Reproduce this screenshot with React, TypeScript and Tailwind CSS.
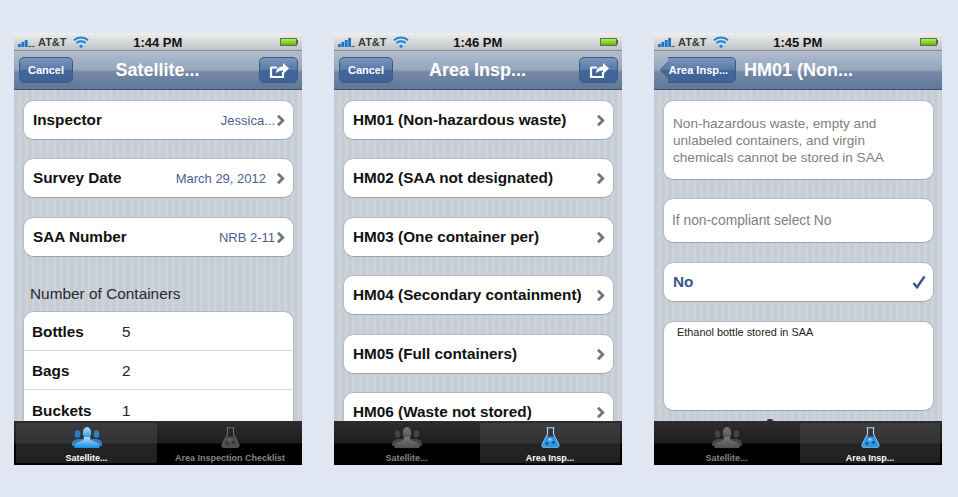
import React from "react";

const stripes =
  "bg-[repeating-linear-gradient(90deg,#c6cdd6_0px,#c6cdd6_4px,#ccd3db_4px,#ccd3db_7px)]";

function Signal({ full }: { full: boolean }) {
  const hs = [3, 5, 7, 9, 9];
  return (
    <svg width="18" height="9" viewBox="0 0 18 9" className="block">
      {hs.map((h, i) => {
        const on = i < (full ? 4 : 3);
        return (
          <rect
            key={i}
            x={i * 3.4}
            y={on ? 9 - h : 8}
            width="2.8"
            height={on ? h : 1}
            fill={on ? "#1f74c8" : "#555"}
          />
        );
      })}
    </svg>
  );
}

function Wifi() {
  return (
    <svg width="16" height="12" viewBox="0 0 16 12" className="block" fill="none" stroke="#0f80e4" strokeWidth="2">
      <path d="M1 4.200C5 .6 11 .6 15 4.200" />
      <path d="M3.500 7C6 4.800 10 4.800 12.500 7" />
      <circle cx="8" cy="10.300" r="1.500" fill="#0f80e4" stroke="none" />
    </svg>
  );
}

function Battery() {
  return (
    <div className="flex items-center">
      <div className="w-[17px] h-[8px] border border-[#6a6a50] bg-gradient-to-b from-[#b4f04c] to-[#58b81c]" />
      <div className="w-[1px] h-[4px] bg-[#555]" />
    </div>
  );
}

function StatusBar({ time, full }: { time: string; full: boolean }) {
  return (
    <div className="h-[18px] flex items-center pt-[1px] px-[4px] bg-gradient-to-b from-[#eef0ef] to-[#bfc3c3] border-b border-[#8a8f93]">
      <Signal full={full} />
      <span className="ml-[2px] text-[11px] font-bold text-[#3a3a3a] leading-none">AT&amp;T</span>
      <span className="ml-[6px]">
        <Wifi />
      </span>
      <span className="flex-1 text-center text-[13px] font-bold text-[#111] leading-none pr-[53px]">{time}</span>
      <Battery />
    </div>
  );
}

function ShareIcon() {
  return (
    <svg width="22" height="18" viewBox="0 0 22 18" className="block">
      <path d="M3 6.500h6M3 6v10h12v-5" fill="none" stroke="#fff" strokeWidth="2.200" />
      <path d="M8 12.500c0-4.500 3-7 7-7V2l6 5.500-6 5.500V9.500c-3 0-5 .8-7 3z" fill="#fff" />
    </svg>
  );
}

function NavBar({ children }: { children: React.ReactNode }) {
  return (
    <div className="h-[39px] flex items-center pl-[5px] pr-[4px] border-b border-[#3f5068] bg-[linear-gradient(180deg,#b2bdce_0%,#94a5bb_50%,#7589a5_55%,#5f7899_100%)]">
      {children}
    </div>
  );
}

const btn =
  "h-[26px] flex items-center justify-center rounded-[5px] border border-[#3e5a80] bg-[linear-gradient(180deg,#7896bb_0%,#587aa6_50%,#44679b_52%,#3f6396_100%)] text-white font-bold leading-none";

function Chevron() {
  return (
    <svg width="9" height="13" viewBox="0 0 9 13" className="block shrink-0">
      <path d="M2 1.700 6.800 6.500 2 11.300" fill="none" stroke="#737679" strokeWidth="2.800" />
    </svg>
  );
}

function Card({
  label,
  value,
  mt,
  valueGap,
}: {
  label: string;
  value?: string;
  mt: string;
  valueGap?: string;
}) {
  return (
    <div
      className={`h-[40px] ${mt} flex items-center pl-[9px] pr-[8px] bg-white rounded-[10px] border border-[#b4b9c0] border-b-[#9fa5ad]`}
    >
      <span className="flex-1 whitespace-nowrap text-[15.3px] font-bold text-[#111] leading-none">{label}</span>
      {value && <span className={`text-[13px] text-[#4a6190] leading-none ${valueGap ?? "mr-[1px]"}`}>{value}</span>}
      <Chevron />
    </div>
  );
}

function PeopleIcon({ active, id }: { active: boolean; id: string }) {
  const back = active ? "#2f7fc8" : "#444";
  const light = active ? "#b2dcfb" : "#777";
  const dark = active ? "#1590e4" : "#505050";
  return (
    <svg width="30" height="21" viewBox="0 0 30 21" className="block">
      <defs>
        <linearGradient id={id} x1="0" y1="0" x2="0" y2="1">
          <stop offset="0" stopColor={light} />
          <stop offset="1" stopColor={dark} />
        </linearGradient>
      </defs>
      <ellipse cx="5.500" cy="7" rx="2.800" ry="3.800" fill={back} />
      <ellipse cx="24.500" cy="7" rx="2.800" ry="3.800" fill={back} />
      <path d="M0 19v-3c0-2 3-3.500 5.500-4h19c2.500.5 5.500 2 5.500 4v3z" fill={back} />
      <ellipse cx="15" cy="6" rx="4.200" ry="6" fill={`url(#${id})`} />
      <path d="M2.500 21v-2.500c0-2.500 5-4 9-5.500l.5-3h6l.5 3c4 1.500 9 3 9 5.500V21z" fill={`url(#${id})`} />
    </svg>
  );
}

function FlaskIcon({ active }: { active: boolean }) {
  const c = active ? "#2a96e6" : "#4e4e4e";
  const l = active ? "#a8d9f8" : "#6f6f6f";
  const d = active ? "#12466f" : "#2a2a2a";
  const s = active ? "#9fd6f8" : "#6a6a6a";
  return (
    <svg width="19" height="21" viewBox="0 0 19 21" className="block">
      <path d="M5.500.7h8M6.500.7v6.500L1.300 17.500c-.7 1.700.2 2.800 1.700 2.800h13c1.500 0 2.400-1.100 1.700-2.800L12.500 7.200V.7" fill="none" stroke={l} strokeWidth="1.100" />
      <path d="M5.400 9.500h8.200L17.500 18c.4 1.300-.3 2.200-1.700 2.200H3.200c-1.400 0-2.100-.9-1.700-2.200z" fill={c} />
      <circle cx="9" cy="12.500" r="1.500" fill={s} />
      <circle cx="12.500" cy="15.500" r="1.300" fill={d} />
      <circle cx="6" cy="16.500" r="1.300" fill={d} />
    </svg>
  );
}

function TabBar({ active, first, second, id }: { active: 0 | 1; first: string; second: string; id: string }) {
  const tab = (i: 0 | 1, width: string, label: string, icon: React.ReactNode) => (
    <div
      className={`${width} h-[40px] flex flex-col items-center justify-between rounded-[2px] ${
        active === i ? "bg-[linear-gradient(180deg,#3c3c3c_0%,#323232_50%,#242424_52%,#202020_100%)]" : ""
      }`}
    >
      <div className="pt-[4px]">{icon}</div>
      <span
        className={`text-[9px] font-bold leading-none whitespace-nowrap ${
          active === i ? "text-white" : "text-[#868686]"
        }`}
      >
        {label}
      </span>
    </div>
  );
  return (
    <div className="h-[44px] flex items-start justify-between pt-[2px] pl-[2px] pr-[2px] bg-[linear-gradient(180deg,#2d2d2d_0%,#1e1e1e_50%,#000_52%,#000_100%)]">
      {tab(0, "w-[141px]", first, <PeopleIcon active={active === 0} id={id} />)}
      {tab(1, "w-[140px]", second, <FlaskIcon active={active === 1} />)}
    </div>
  );
}

function Phone({
  time,
  full,
  nav,
  active,
  first,
  second,
  id,
  children,
}: {
  time: string;
  full: boolean;
  nav: React.ReactNode;
  active: 0 | 1;
  first: string;
  second: string;
  id: string;
  children: React.ReactNode;
}) {
  return (
    <div className="w-[288px] h-[432px] flex flex-col">
      <StatusBar time={time} full={full} />
      <NavBar>{nav}</NavBar>
      <div className={`h-[331px] overflow-hidden pl-[9px] pr-[8px] ${stripes}`}>{children}</div>
      <TabBar active={active} first={first} second={second} id={id} />
    </div>
  );
}

function Title({ children }: { children: React.ReactNode }) {
  return <span className="flex-1 text-center text-[18px] font-bold text-white leading-none pr-[17px]">{children}</span>;
}

function CountRow({ label, value, last }: { label: string; value: string; last?: boolean }) {
  return (
    <div className={`flex items-center pl-[8px] ${last ? "h-[40px]" : "h-[39px] border-b border-[#d8d8d8]"}`}>
      <span className="w-[90px] text-[15.3px] font-bold text-[#111] leading-none">{label}</span>
      <span className="text-[15.3px] text-[#222] leading-none">{value}</span>
    </div>
  );
}

export default function App() {
  return (
    <div
      className="w-[958px] h-[497px] pt-[33px] pl-[14px] flex gap-[32px] bg-[#e0e7f3] overflow-hidden"
      style={{ fontFamily: '"Liberation Sans", Arial, sans-serif' }}
    >
      <Phone
        time="1:44 PM"
        full={false}
        active={0}
        first="Satellite..."
        second="Area Inspection Checklist"
        id="p1"
        nav={
          <>
            <div className={`${btn} w-[54px] text-[11px]`}>Cancel</div>
            <Title>Satellite...</Title>
            <div className={`${btn} w-[39px]`}>
              <ShareIcon />
            </div>
          </>
        }
      >
        <Card mt="mt-[10px]" label="Inspector" value="Jessica..." />
        <Card mt="mt-[18px]" label="Survey Date" value="March 29, 2012" valueGap="mr-[10px]" />
        <Card mt="mt-[19px]" label="SAA Number" value="NRB 2-11" />
        <div className="mt-[29px] pl-[7px] text-[15.4px] text-[#2a2a2a] leading-none">Number of Containers</div>
        <div className="mt-[10px] bg-white rounded-t-[10px] border border-[#b4b9c0] border-b-0">
          <CountRow label="Bottles" value="5" />
          <CountRow label="Bags" value="2" />
          <CountRow label="Buckets" value="1" last />
        </div>
      </Phone>

      <Phone
        time="1:46 PM"
        full
        active={1}
        first="Satellite..."
        second="Area Insp..."
        id="p2"
        nav={
          <>
            <div className={`${btn} w-[54px] text-[11px]`}>Cancel</div>
            <Title>Area Insp...</Title>
            <div className={`${btn} w-[39px]`}>
              <ShareIcon />
            </div>
          </>
        }
      >
        <Card mt="mt-[10px]" label="HM01 (Non-hazardous waste)" />
        <Card mt="mt-[18px]" label="HM02 (SAA not designated)" />
        <Card mt="mt-[19px]" label="HM03 (One container per)" />
        <Card mt="mt-[18px]" label="HM04 (Secondary containment)" />
        <Card mt="mt-[19px]" label="HM05 (Full containers)" />
        <Card mt="mt-[18px]" label="HM06 (Waste not stored)" />
      </Phone>

      <Phone
        time="1:45 PM"
        full
        active={1}
        first="Satellite..."
        second="Area Insp..."
        id="p3"
        nav={
          <>
            <div className="relative ml-[9px]">
              <div className="absolute left-[-5px] top-[4px] w-[18px] h-[18px] rotate-45 rounded-[2px] border-l border-b border-[#3e5a80] bg-[linear-gradient(135deg,#7896bb_0%,#587aa6_50%,#44679b_52%,#3f6396_100%)]" />
              <div className={`${btn} relative w-[68px] text-[11px] border-l-0 rounded-l-none bg-clip-padding pr-[6px] whitespace-nowrap`}>
                Area Insp...
              </div>
            </div>
            <span className="ml-[8px] text-[18px] font-bold text-white leading-none whitespace-nowrap">HM01 (Non...</span>
          </>
        }
      >
        <div className="mt-[10px] h-[80px] pt-[14px] pl-[9px] bg-white rounded-[10px] border border-[#b4b9c0] border-b-[#9fa5ad] text-[13.6px] leading-[17px] text-[#808080]">
          Non-hazardous waste, empty and
          <br />
          unlabeled containers, and virgin
          <br />
          chemicals cannot be stored in SAA
        </div>
        <div className="mt-[18px] h-[45px] flex items-center pl-[8px] bg-white rounded-[10px] border border-[#b4b9c0] border-b-[#9fa5ad] text-[13.8px] text-[#808080] leading-none">
          If non-compliant select No
        </div>
        <div className="mt-[19px] h-[40px] flex items-center justify-between pl-[9px] pr-[7px] bg-white rounded-[10px] border border-[#b4b9c0] border-b-[#9fa5ad]">
          <span className="text-[15.3px] font-bold text-[#3b5488] leading-none">No</span>
          <svg width="14" height="14" viewBox="0 0 14 14" className="block">
            <path d="M1.500 8 5 12.300 12.500 1.500" fill="none" stroke="#3b5488" strokeWidth="2.400" />
          </svg>
        </div>
        <div className="mt-[19px] h-[90px] pt-[4px] pl-[13px] bg-white rounded-[10px] border border-[#b4b9c0] border-b-[#9fa5ad] text-[10.9px] leading-[13px] text-[#222]">
          Ethanol bottle stored in SAA
        </div>
        <div className="mt-[8px] ml-[104px] w-[6px] h-[2px] rounded-t-full bg-[#333]" />
      </Phone>
    </div>
  );
}
